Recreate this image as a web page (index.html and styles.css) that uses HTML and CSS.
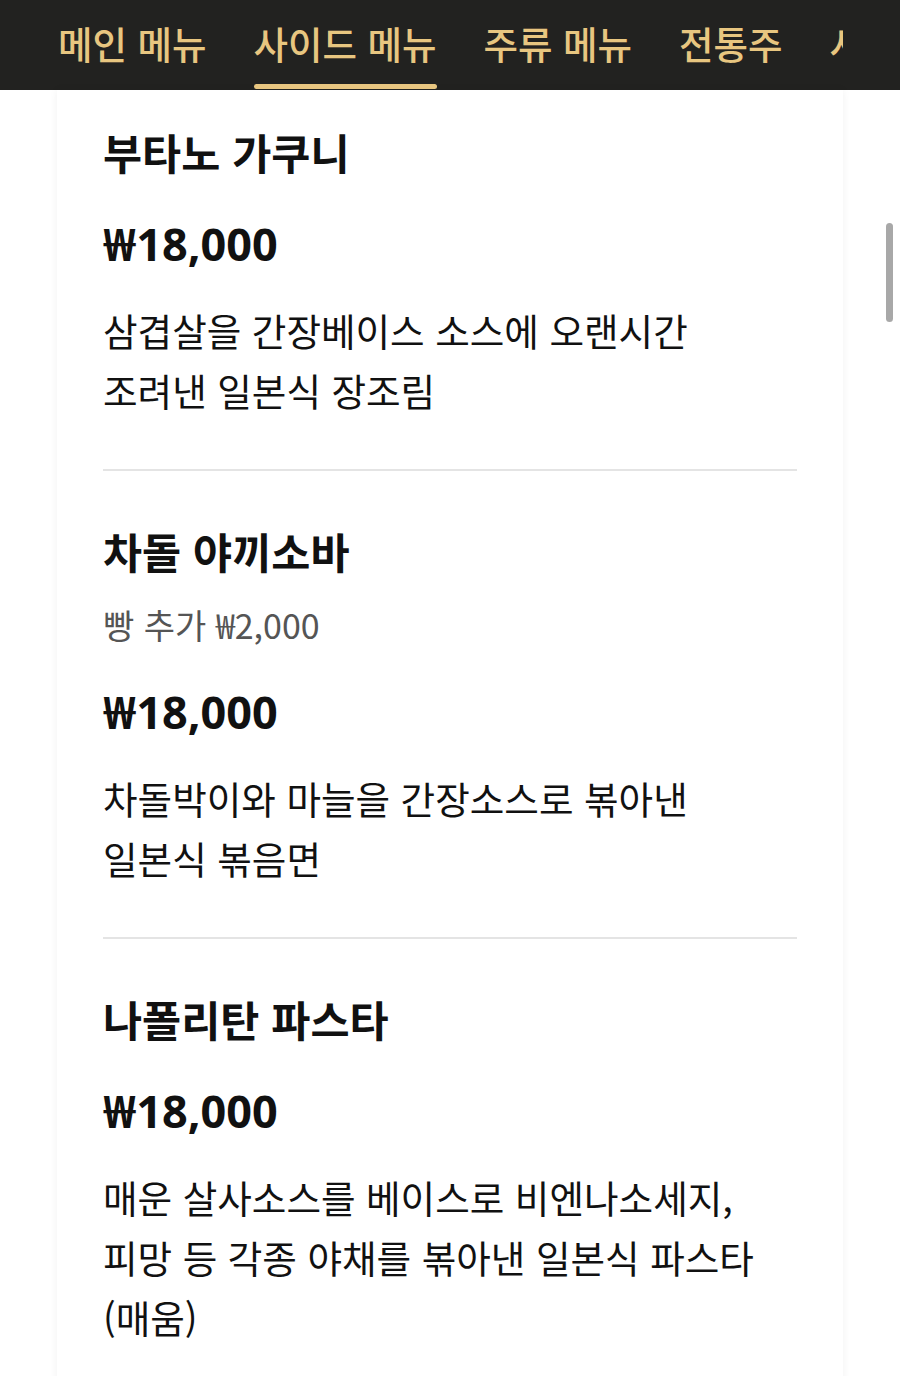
FILE: index.html
```html
<!DOCTYPE html>
<html lang="ko">
<head>
<meta charset="utf-8">
<title>사이드 메뉴</title>
<link rel="stylesheet" href="styles.css">
</head>
<body>
<nav class="nav">
  <div class="nav-inner">
    <a class="tab">메인 메뉴</a>
    <a class="tab active">사이드 메뉴</a>
    <a class="tab">주류 메뉴</a>
    <a class="tab">전통주</a>
    <a class="tab">사케</a>
  </div>
</nav>
<main class="card">
  <section class="item first">
    <h2 class="title">부타노 가쿠니</h2>
    <p class="price">₩18,000</p>
    <p class="desc">삼겹살을 간장베이스 소스에 오랜시간<br>조려낸 일본식 장조림</p>
  </section>
  <section class="item">
    <h2 class="title">차돌 야끼소바</h2>
    <p class="sub">빵 추가 ₩2,000</p>
    <p class="price">₩18,000</p>
    <p class="desc">차돌박이와 마늘을 간장소스로 볶아낸<br>일본식 볶음면</p>
  </section>
  <section class="item last">
    <h2 class="title">나폴리탄 파스타</h2>
    <p class="price">₩18,000</p>
    <p class="desc">매운 살사소스를 베이스로 비엔나소세지,<br>피망 등 각종 야채를 볶아낸 일본식 파스타<br>(매움)</p>
  </section>
</main>
<div class="scrollbar"></div>
</body>
</html>
```

FILE: styles.css
```css
* { box-sizing: border-box; }
html, body {
  margin: 0;
  padding: 0;
  background: #ffffff;
  font-family: "Noto Sans CJK KR", "Noto Sans", sans-serif;
  color: #111111;
  overflow: hidden;
}
.nav {
  height: 90px;
  background: #222220;
}
.nav-inner {
  margin-left: 57px;
  width: 786px;
  height: 90px;
  overflow: hidden;
  display: flex;
  gap: 47px;
  padding-left: 1px;
  white-space: nowrap;
}
.tab {
  display: flex;
  flex-direction: column;
  padding-top: 17px;
  font-size: 37.5px;
  line-height: 52px;
  font-weight: 500;
  color: #e8c680;
  flex: none;
}
.tab.active::after {
  content: "";
  display: block;
  height: 5px;
  margin-top: 15px;
  border-radius: 3px;
  background: #e8c680;
}
.card {
  margin-left: 57px;
  width: 786px;
  background: #ffffff;
  padding: 0 46px;
  box-shadow: 0 0 8px rgba(0, 0, 0, 0.06);
  min-height: 1286px;
}
.item {
  padding: 52px 0 49px;
  border-bottom: 2px solid #e4e4e4;
}
.item.first { padding-top: 34px; }
.item.last { border-bottom: none; }
.title {
  margin: 0 0 34px;
  font-size: 42.5px;
  line-height: 56px;
  font-weight: 700;
}
.sub {
  margin: -10px 0 35px;
  font-size: 34px;
  line-height: 44px;
  color: #555555;
}
.price {
  margin: 0 0 26px;
  font-family: "Noto Sans", "Noto Sans CJK KR", sans-serif;
  font-size: 45px;
  line-height: 60px;
  font-weight: 700;
}
.desc {
  margin: 0;
  font-size: 37.6px;
  line-height: 60px;
}
.scrollbar {
  position: fixed;
  left: 886px;
  top: 223px;
  width: 7px;
  height: 99px;
  border-radius: 4px;
  background: #a8a8a8;
}
```
